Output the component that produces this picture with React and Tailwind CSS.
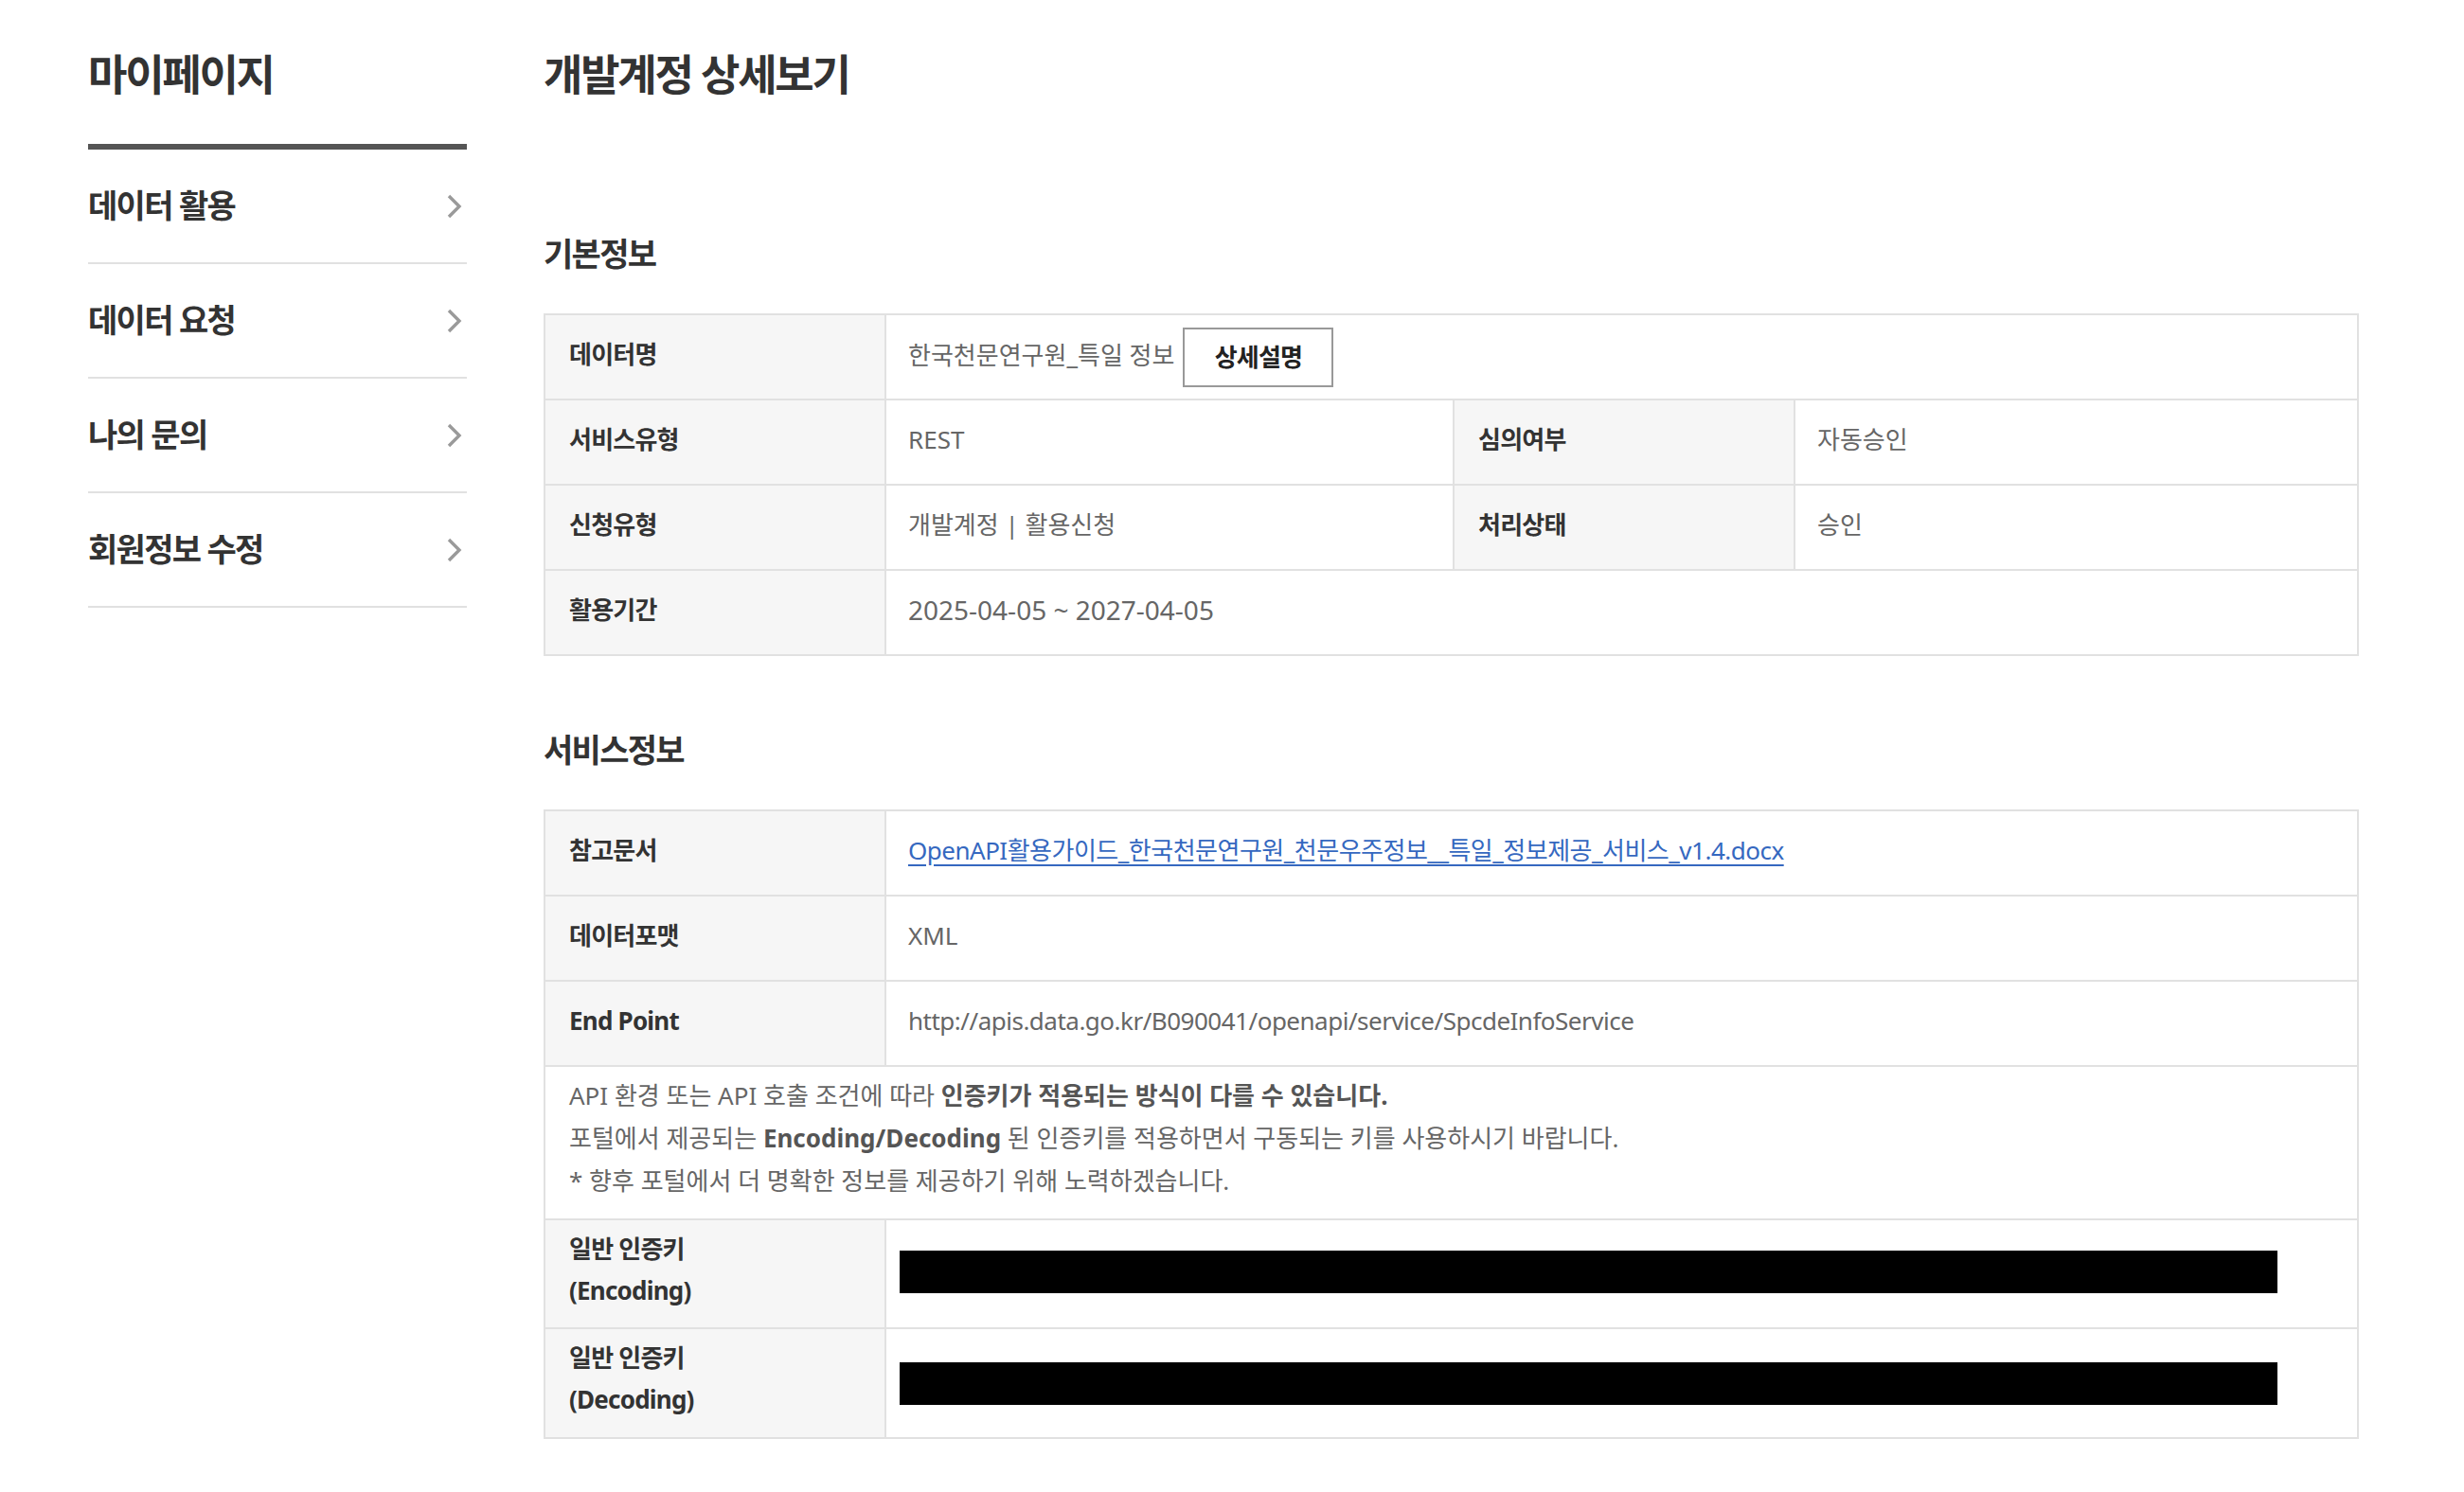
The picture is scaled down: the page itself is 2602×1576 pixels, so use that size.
import React from 'react';

const menu = ['데이터 활용', '데이터 요청', '나의 문의', '회원정보 수정'];

const Chevron = () => (
  <svg width="18" height="28" viewBox="0 0 18 28" fill="none">
    <path d="M3 3 L14 14 L3 25" stroke="#9a9a9a" strokeWidth="3.4" />
  </svg>
);

const th = 'bg-[#f6f6f6] border-2 border-[#e1e1e1] px-[25px] text-left font-bold text-[#333] tracking-[-0.03em] align-middle';
const td = 'border-2 border-[#e1e1e1] px-[23px] text-[#666] align-middle';

const App = () => {
  return (
    <div className="min-h-screen bg-white font-['Noto_Sans','Noto_Sans_CJK_KR',sans-serif] flex pl-[93px] pt-[52px]">
      <aside className="w-[400px] shrink-0">
        <h2 className="text-[45px] leading-[54px] font-bold text-[#333] tracking-[-0.05em] pb-[46px] border-b-[6px] border-[#555]">
          마이페이지
        </h2>
        <ul>
          {menu.map((m) => (
            <li key={m} className="h-[121px] border-b-2 border-[#e1e1e1] flex items-center justify-between pr-[4px]">
              <span className="text-[34px] font-bold text-[#333] tracking-[-0.05em]">{m}</span>
              <Chevron />
            </li>
          ))}
        </ul>
      </aside>

      <main className="ml-[81px] w-[1917px] shrink-0 text-[26px]">
        <h1 className="text-[45px] leading-[54px] font-bold text-[#333] tracking-[-0.05em]">개발계정 상세보기</h1>

        <h3 className="mt-[140px] mb-[41px] text-[34px] leading-[44px] font-bold text-[#333] tracking-[-0.05em]">기본정보</h3>
        <table className="w-full border-collapse table-fixed">
          <colgroup>
            <col className="w-[360px]" />
            <col className="w-[600px]" />
            <col className="w-[360px]" />
            <col />
          </colgroup>
          <tbody>
            <tr className="h-[90px]">
              <th className={`${th} pb-[6px]`}>데이터명</th>
              <td className={td} colSpan={3}>
                <div className="flex items-center">
                  <span className="-mt-[3px]">한국천문연구원_특일 정보</span>
                  <button className="ml-[9px] w-[159px] h-[63px] border-2 border-[#999] bg-white font-bold text-[#222] tracking-[-0.03em]">상세설명</button>
                </div>
              </td>
            </tr>
            <tr className="h-[90px]">
              <th className={`${th} pb-[6px]`}>서비스유형</th>
              <td className={`${td} pb-[6px]`}>REST</td>
              <th className={`${th} pb-[6px]`}>심의여부</th>
              <td className={`${td} pb-[6px]`}>자동승인</td>
            </tr>
            <tr className="h-[90px]">
              <th className={`${th} pb-[6px]`}>신청유형</th>
              <td className={`${td} pb-[6px]`}>개발계정 | 활용신청</td>
              <th className={`${th} pb-[6px]`}>처리상태</th>
              <td className={`${td} pb-[6px]`}>승인</td>
            </tr>
            <tr className="h-[90px]">
              <th className={`${th} pb-[6px]`}>활용기간</th>
              <td className={`${td} pb-[6px] text-[28px]`} colSpan={3}>2025-04-05 ~ 2027-04-05</td>
            </tr>
          </tbody>
        </table>

        <h3 className="mt-[77px] mb-[41px] text-[34px] leading-[44px] font-bold text-[#333] tracking-[-0.05em]">서비스정보</h3>
        <table className="w-full border-collapse table-fixed">
          <colgroup>
            <col className="w-[360px]" />
            <col />
          </colgroup>
          <tbody>
            <tr className="h-[90px]">
              <th className={`${th} pb-[6px]`}>참고문서</th>
              <td className={`${td} pb-[6px] tracking-[-0.5px]`}>
                <a href="#" className="text-[#3568c0] underline underline-offset-[5px]">
                  OpenAPI활용가이드_한국천문연구원_천문우주정보__특일_정보제공_서비스_v1.4.docx
                </a>
              </td>
            </tr>
            <tr className="h-[90px]">
              <th className={`${th} pb-[6px]`}>데이터포맷</th>
              <td className={`${td} pb-[6px]`}>XML</td>
            </tr>
            <tr className="h-[90px]">
              <th className={`${th} pb-[6px]`}>End Point</th>
              <td className={`${td} pb-[6px] tracking-[-0.5px]`}>http://apis.data.go.kr/B090041/openapi/service/SpcdeInfoService</td>
            </tr>
            <tr>
              <td colSpan={2} className="border-2 border-[#e1e1e1] px-[25px] pt-[8px] pb-[17px] leading-[45px] text-[#666]">
                <p>API 환경 또는 API 호출 조건에 따라 <b className="text-[#555]">인증키가 적용되는 방식이 다를 수 있습니다.</b></p>
                <p>포털에서 제공되는 <b className="text-[#555]">Encoding/Decoding</b> 된 인증키를 적용하면서 구동되는 키를 사용하시기 바랍니다.</p>
                <p>* 향후 포털에서 더 명확한 정보를 제공하기 위해 노력하겠습니다.</p>
              </td>
            </tr>
            <tr className="h-[115px]">
              <th className={`${th} leading-[44px] pb-[10px]`}>일반 인증키<br />(Encoding)</th>
              <td className="border-2 border-[#e1e1e1] pl-[14px] pb-[4px] align-middle">
                <div className="w-[1455px] h-[45px] bg-black" />
              </td>
            </tr>
            <tr className="h-[116px]">
              <th className={`${th} leading-[44px] pb-[10px]`}>일반 인증키<br />(Decoding)</th>
              <td className="border-2 border-[#e1e1e1] pl-[14px] align-middle">
                <div className="w-[1455px] h-[45px] bg-black" />
              </td>
            </tr>
          </tbody>
        </table>
      </main>
    </div>
  );
};

export default App;
